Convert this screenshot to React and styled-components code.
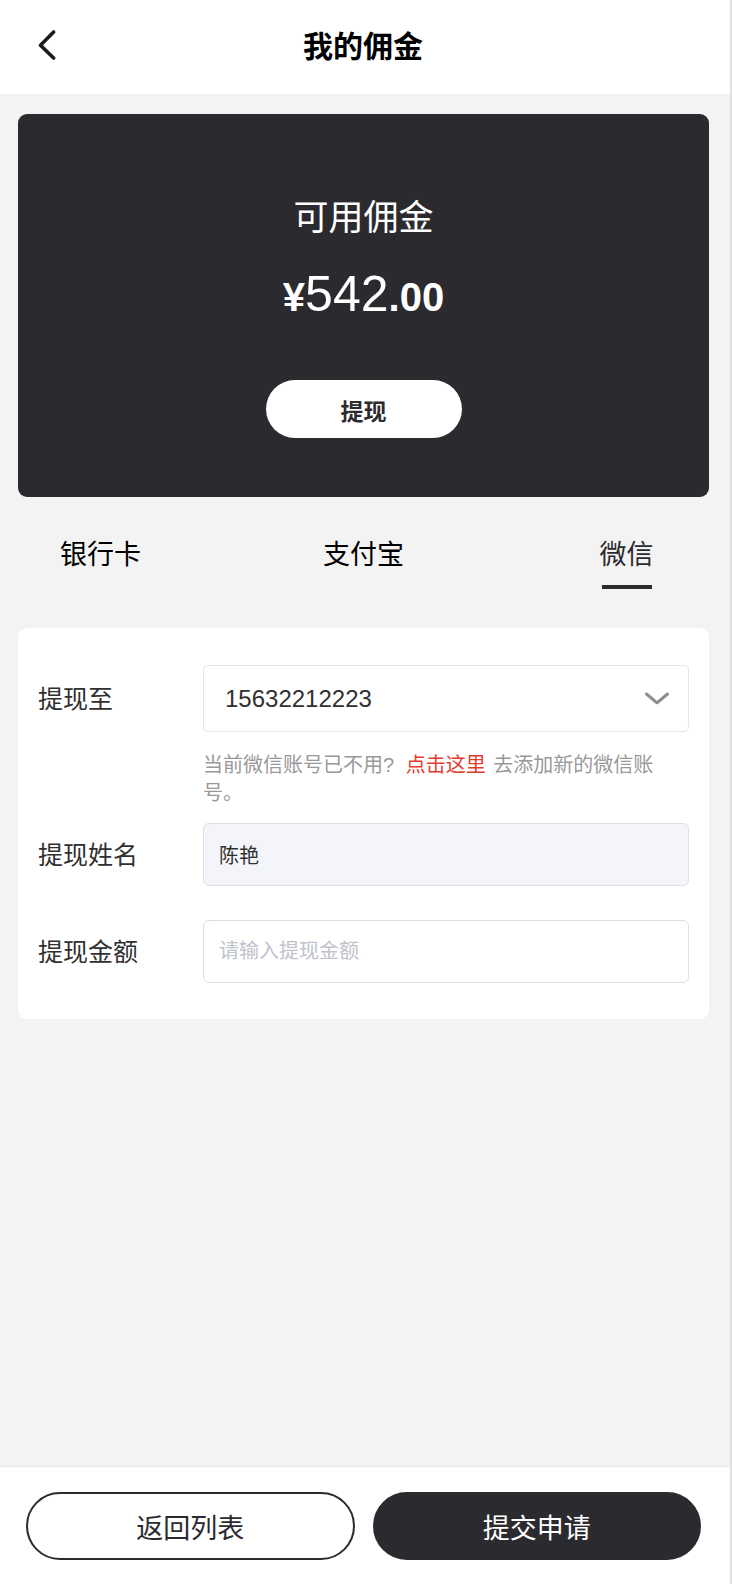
import React, { useState } from "react";
import styled, { createGlobalStyle } from "styled-components";

const GlobalStyle = createGlobalStyle`
  * {
    box-sizing: border-box;
  }

  body {
    margin: 0;
    background: #f3f3f3;
    color: #303030;
    font-family: "Liberation Sans", "Noto Sans CJK SC", sans-serif;
  }

  button,
  input,
  select {
    font-family: inherit;
  }
`;

const Page = styled.div`
  min-height: 100vh;
  display: flex;
  flex-direction: column;
  border-right: 2px solid #e0e0e0;
`;

const Header = styled.header`
  padding: 20px 34px 20px 30px;
  display: grid;
  grid-template-columns: 32px 1fr 32px;
  align-items: start;
  background: #fff;
`;

const BackButton = styled.button`
  height: 48px;
  padding: 0;
  display: flex;
  align-items: center;
  justify-content: center;
  border: none;
  background: none;
  color: #1c1c1e;
  cursor: pointer;
`;

const Title = styled.h1`
  margin: 0;
  font-size: 30px;
  line-height: 54px;
  font-weight: 700;
  text-align: center;
  color: #000;
`;

const Main = styled.main`
  flex: 1;
  padding: 20px 21px 24px 18px;
`;

const BalanceCard = styled.section`
  padding: 78px 20px 59px;
  display: flex;
  flex-direction: column;
  align-items: center;
  border-radius: 9px;
  background: #2b2a2f;
  color: #fff;
`;

const BalanceLabel = styled.div`
  font-size: 35px;
  line-height: 52px;
`;

const Amount = styled.div`
  margin: 20px 0 53px;
  font-size: 40px;
  line-height: 60px;
  font-weight: 700;

  span {
    font-size: 50px;
    font-weight: 400;
  }
`;

const WithdrawButton = styled.button`
  width: 196px;
  height: 58px;
  padding: 2px 0 0;
  border: none;
  border-radius: 29px;
  background: #fff;
  color: #2b2a2f;
  font-size: 23px;
  font-weight: 700;
  cursor: pointer;
`;

const Tabs = styled.div`
  padding: 38px 42px 39px;
  display: flex;
  justify-content: space-between;
`;

const Tab = styled.button`
  min-width: 81px;
  padding: 0;
  display: flex;
  flex-direction: column;
  align-items: center;
  gap: 10px;
  border: none;
  background: none;
  color: ${({ $active }) => ($active ? "#2b2a2f" : "#000")};
  font-size: 27px;
  line-height: 40px;
  cursor: pointer;

  &::after {
    content: "";
    width: 50px;
    height: 4px;
    background: ${({ $active }) => ($active ? "#2b2a2f" : "transparent")};
  }
`;

const FormCard = styled.form`
  padding: 37px 20px 36px;
  border-radius: 9px;
  background: #fff;
`;

const FormRow = styled.div`
  display: grid;
  grid-template-columns: 165px 1fr;
  align-items: center;

  & + & {
    margin-top: 34px;
  }
`;

const Label = styled.label`
  font-size: 25px;
  line-height: 36px;
`;

const SelectBox = styled.div`
  position: relative;

  svg {
    position: absolute;
    top: 27px;
    right: 19px;
    pointer-events: none;
  }
`;

const Select = styled.select`
  display: block;
  width: 100%;
  height: 67px;
  padding: 0 60px 0 21px;
  appearance: none;
  border: 1px solid #e4e4ec;
  border-radius: 5px;
  background: #fff;
  color: #303030;
  font-size: 24px;
`;

const Hint = styled.p`
  margin: 19px 0 16px 165px;
  color: #999;
  font-size: 20px;
  line-height: 28px;

  a {
    margin: 0 2px 0 6px;
    color: #e23c2f;
    text-decoration: none;
  }
`;

const Input = styled.input`
  width: 100%;
  height: 63px;
  padding: 0 15px;
  border: 1px solid #dcdfe6;
  border-radius: 6px;
  background: #fff;
  color: #303030;
  font-size: 20px;

  &:read-only {
    background: #f4f5fa;
  }

  &::placeholder {
    color: #c0c2cc;
    opacity: 1;
  }
`;

const Footer = styled.footer`
  padding: 25px 29px 24px 26px;
  display: flex;
  gap: 18px;
  border-top: 1px solid #e6e6e6;
  background: #fff;
`;

const FooterButton = styled.button`
  flex: 1;
  height: 68px;
  padding: 0;
  border: 2px solid #2b2a2f;
  border-radius: 34px;
  background: ${({ $primary }) => ($primary ? "#2b2a2f" : "#fff")};
  color: ${({ $primary }) => ($primary ? "#fff" : "#2b2a2f")};
  font-size: 27px;
  cursor: pointer;
`;

const METHODS = ["银行卡", "支付宝", "微信"];

const App = () => {
  const [method, setMethod] = useState("微信");
  const [amount, setAmount] = useState("");

  return (
    <>
      <GlobalStyle />
      <Page>
        <Header>
          <BackButton type="button" aria-label="返回">
            <svg width="20" height="32" viewBox="0 0 20 32" fill="none">
              <path
                d="M17.6 4L4.5 17.2L17.6 30"
                stroke="currentColor"
                strokeWidth="3.6"
                strokeLinecap="round"
                strokeLinejoin="round"
              />
            </svg>
          </BackButton>
          <Title>我的佣金</Title>
        </Header>

        <Main>
          <BalanceCard>
            <BalanceLabel>可用佣金</BalanceLabel>
            <Amount>
              ¥<span>542</span>.00
            </Amount>
            <WithdrawButton type="button">提现</WithdrawButton>
          </BalanceCard>

          <Tabs role="tablist">
            {METHODS.map((name) => (
              <Tab
                key={name}
                type="button"
                role="tab"
                aria-selected={name === method}
                $active={name === method}
                onClick={() => setMethod(name)}
              >
                {name}
              </Tab>
            ))}
          </Tabs>

          <FormCard id="withdraw" onSubmit={(e) => e.preventDefault()}>
            <FormRow>
              <Label htmlFor="account">提现至</Label>
              <SelectBox>
                <Select id="account">
                  <option>15632212223</option>
                </Select>
                <svg width="26" height="14" viewBox="0 0 26 14" fill="none">
                  <path
                    d="M2.5 2L13 10.8L23.5 2"
                    stroke="#8c8c8c"
                    strokeWidth="3"
                    strokeLinecap="round"
                    strokeLinejoin="round"
                  />
                </svg>
              </SelectBox>
            </FormRow>

            <Hint>
              当前微信账号已不用? <a href="#add">点击这里</a> 去添加新的微信账号。
            </Hint>

            <FormRow>
              <Label htmlFor="name">提现姓名</Label>
              <Input id="name" value="陈艳" readOnly />
            </FormRow>

            <FormRow>
              <Label htmlFor="amount">提现金额</Label>
              <Input
                id="amount"
                inputMode="decimal"
                placeholder="请输入提现金额"
                value={amount}
                onChange={(e) => setAmount(e.target.value)}
              />
            </FormRow>
          </FormCard>
        </Main>

        <Footer>
          <FooterButton type="button">返回列表</FooterButton>
          <FooterButton type="submit" form="withdraw" $primary>
            提交申请
          </FooterButton>
        </Footer>
      </Page>
    </>
  );
};

export default App;
